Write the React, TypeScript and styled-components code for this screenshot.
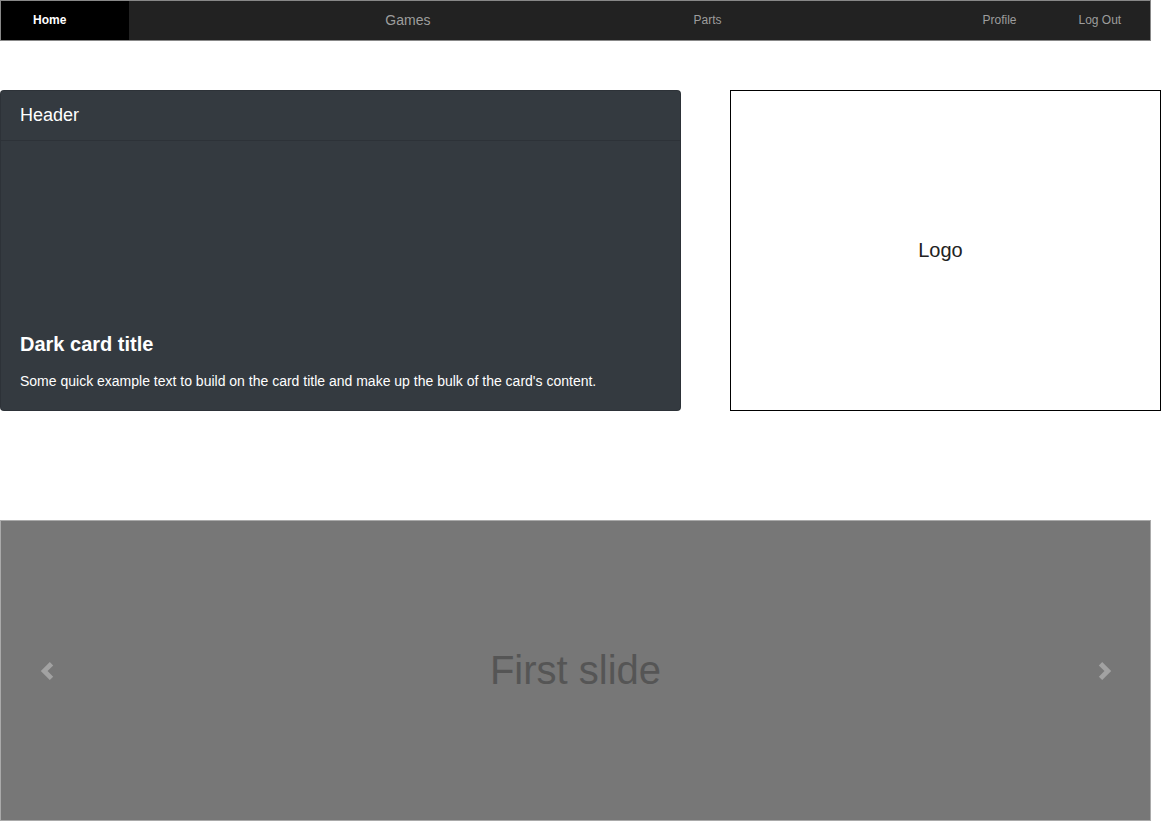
import { ReactElement } from 'react';
import styled, { createGlobalStyle } from 'styled-components';

const GlobalStyle = createGlobalStyle`
  body {
    margin: 0;
    font-family: "Liberation Sans", Arial, sans-serif;
    background: #fff;
    overflow: hidden;
  }
`;

const Page = styled.div`
  width: 1161px;
`;

const Navbar = styled.nav`
  display: flex;
  align-items: stretch;
  width: 1151px;
  height: 41px;
  box-sizing: border-box;
  border: 1px solid #888;
  background: #222;
`;

const NavItem = styled.a<{ $active?: boolean; $offset?: number; $size?: number }>`
  display: flex;
  align-items: center;
  margin-left: ${(p) => p.$offset ?? 0}px;
  padding: ${(p) => (p.$active ? '0 63px 1px 32px' : '0 0 1px')};
  background: ${(p) => (p.$active ? '#000' : 'transparent')};
  color: ${(p) => (p.$active ? '#fff' : '#9d9d9d')};
  font-size: ${(p) => p.$size ?? 12}px;
  font-weight: ${(p) => (p.$active ? 700 : 400)};
  text-decoration: none;
  white-space: nowrap;
`;

const TopRow = styled.div`
  display: grid;
  grid-template-columns: 681px 431px;
  column-gap: 49px;
  margin-top: 49px;
`;

const Card = styled.div`
  display: flex;
  flex-direction: column;
  height: 321px;
  box-sizing: border-box;
  background: #343a40;
  border: 1px solid rgba(0, 0, 0, 0.125);
  border-radius: 4px;
  color: #fff;
`;

const CardHeader = styled.div`
  height: 50px;
  padding: 0 19px 1px;
  box-sizing: border-box;
  display: flex;
  align-items: center;
  font-size: 18px;
  border-bottom: 1px solid rgba(0, 0, 0, 0.125);
`;

const CardBody = styled.div`
  flex: 1;
  display: flex;
  flex-direction: column;
  justify-content: flex-end;
  padding: 0 19px 18px;
`;

const CardTitle = styled.h5`
  margin: 0 0 12px;
  font-size: 20px;
  line-height: 30px;
  font-weight: 700;
`;

const CardText = styled.p`
  margin: 0;
  font-size: 14px;
  line-height: 21px;
`;

const LogoBox = styled.div`
  display: flex;
  align-items: center;
  justify-content: center;
  height: 321px;
  box-sizing: border-box;
  padding-right: 10px;
  border: 1px solid #000;
  font-size: 20px;
  color: #222;
`;

const Carousel = styled.div`
  display: flex;
  align-items: center;
  margin-top: 109px;
  width: 1151px;
  height: 301px;
  box-sizing: border-box;
  border: 1px solid #aaa;
  background: #777;
`;

const Control = styled.div`
  width: 91px;
  display: flex;
  justify-content: center;
  align-items: center;
`;

const SlideLabel = styled.div`
  flex: 1;
  text-align: center;
  font-size: 40px;
  color: #555;
`;

const Chevron = ({ flip }: { flip?: boolean }): ReactElement => (
  <svg
    width="18"
    height="18"
    viewBox="0 0 8 8"
    style={flip ? { transform: 'scaleX(-1)' } : undefined}
  >
    <path fill="#a2a2a2" d="M5.25 0l-4 4 4 4 1.5-1.5L4.25 4l2.5-2.5L5.25 0z" />
  </svg>
);

const App = (): ReactElement => (
  <Page>
    <GlobalStyle />
    <Navbar>
      <NavItem $active href="#">Home</NavItem>
      <NavItem $offset={256} $size={14} href="#">Games</NavItem>
      <NavItem $offset={263} href="#">Parts</NavItem>
      <NavItem $offset={261} href="#">Profile</NavItem>
      <NavItem $offset={62} href="#">Log Out</NavItem>
    </Navbar>
    <TopRow>
      <Card>
        <CardHeader>Header</CardHeader>
        <CardBody>
          <CardTitle>Dark card title</CardTitle>
          <CardText>
            Some quick example text to build on the card title and make up the bulk of the card's content.
          </CardText>
        </CardBody>
      </Card>
      <LogoBox>Logo</LogoBox>
    </TopRow>
    <Carousel>
      <Control>
        <Chevron />
      </Control>
      <SlideLabel>First slide</SlideLabel>
      <Control>
        <Chevron flip />
      </Control>
    </Carousel>
  </Page>
);

export default App;
